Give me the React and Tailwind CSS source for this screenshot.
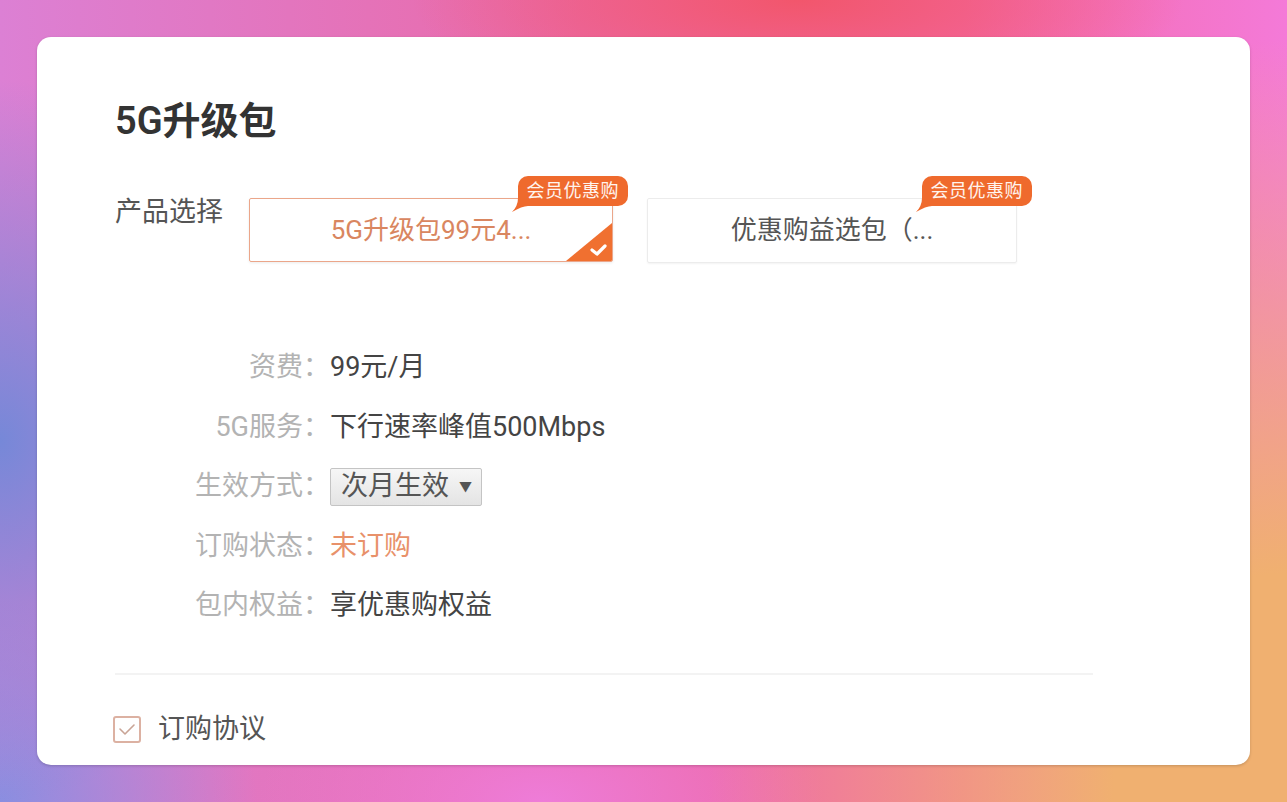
import React from "react";

const FONT = { fontFamily: 'Roboto, "Noto Sans CJK SC", "Noto Sans", sans-serif' };

function Badge() {
  return (
    <div className="absolute top-0 right-[-15px] h-[30px] px-[9px] flex items-center rounded-[10px] rounded-bl-[2px] bg-[#ef6a2d] text-[#fff4ee] text-[18px] leading-none tracking-[0.5px]">
      <svg className="absolute left-[-6px] bottom-[-6px]" width="16" height="14" viewBox="0 0 16 14">
        <path d="M6 0 L16 0 L16 8 Q10 8 0 14 Q6 8 6 0 Z" fill="#ef6a2d" />
      </svg>
      <span className="relative">会员优惠购</span>
    </div>
  );
}

function Row({ label, children }) {
  return (
    <div className="flex items-center h-[59.5px]">
      <div className="w-[215px] text-right text-[27px] text-[#b3b3b3] leading-none">{label}：</div>
      <div className="flex items-center text-[27px] text-[#444] leading-none">{children}</div>
    </div>
  );
}

export default function App() {
  return (
    <div
      style={FONT}
      className="w-[1287px] h-[802px] p-[37px] bg-[image:radial-gradient(30%_14%_at_62%_0%,#f2566c_0%,rgba(242,86,108,0)_100%),radial-gradient(22%_45%_at_0%_55%,#7688d8_0%,rgba(118,136,216,0)_100%),radial-gradient(45%_95%_at_100%_100%,#f0b070_0%,#f0b070_30%,rgba(240,176,112,0)_100%),radial-gradient(22%_18%_at_42%_100%,#ee7cd8_0%,rgba(238,124,216,0)_100%),radial-gradient(20%_25%_at_0%_100%,#8a8ee0_0%,rgba(138,142,224,0)_100%),linear-gradient(to_right,#dc80d4,#ea6aa8_45%,#f36aa8_75%,#f47ad8)]"
    >
      <div className="h-full rounded-[14px] bg-white shadow-[0_1px_3px_rgba(0,0,0,0.18)] pl-[78px] pt-[62px] flex flex-col overflow-hidden">
        <div className="text-[38px] leading-[44px] font-semibold text-[#333]">5G升级包</div>

        <div className="flex items-start mt-[33px]">
          <div className="w-[134px] mt-[18px] text-[27px] leading-[36px] text-[#555]">产品选择</div>
          <div className="relative pt-[22px]">
            <div className="relative w-[364px] h-[64px] border-[1.5px] border-[#eba68a] rounded-[2px] flex items-center justify-center text-[26px] text-[#d98660] shadow-[0_1px_3px_rgba(0,0,0,0.08)] overflow-hidden">
              5G升级包99元4...
              <svg className="absolute right-0 bottom-0" width="46" height="38" viewBox="0 0 46 38">
                <polygon points="46,0 46,38 0,38" fill="#f07030" />
                <polyline points="26,27 31,31 39,23" fill="none" stroke="#fff" strokeWidth="3.2" strokeLinecap="round" strokeLinejoin="round" />
              </svg>
            </div>
            <Badge />
          </div>
          <div className="relative pt-[22px] ml-[34px]">
            <div className="w-[370px] h-[65px] border border-[#ececec] rounded-[2px] flex items-center justify-center text-[26px] text-[#555] shadow-[0_1px_2px_rgba(0,0,0,0.05)]">
              优惠购益选包（...
            </div>
            <Badge />
          </div>
        </div>

        <div className="mt-[75px] ml-0 flex flex-col">
          <Row label="资费">99元/月</Row>
          <Row label="5G服务">下行速率峰值500Mbps</Row>
          <Row label="生效方式">
            <div className="w-[152px] h-[38px] border border-[#c4c4c4] rounded-[2px] bg-gradient-to-b from-[#f6f6f6] to-[#e4e4e4] flex items-center pl-[10px] text-[27px] text-[#555]">
              次月生效
              <span className="ml-[10px] text-[13px] text-[#555]">▼</span>
            </div>
          </Row>
          <Row label="订购状态">
            <span className="text-[#e8916a]">未订购</span>
          </Row>
          <Row label="包内权益">享优惠购权益</Row>
        </div>

        <div className="mt-[37px] w-[978px] h-[2px] bg-[#f3f3f3]" />

        <div className="mt-[35px] flex items-center h-[40px]">
          <div className="w-[28px] h-[27px] border-2 border-[#dcb1a2] rounded-[3px] flex items-center justify-center ml-[-2px]">
            <svg width="18" height="14" viewBox="0 0 18 14">
              <polyline points="2,6 7,11 16,2" fill="none" stroke="#c9a496" strokeWidth="1.6" strokeLinecap="round" strokeLinejoin="round" />
            </svg>
          </div>
          <span className="ml-[17px] text-[27px] text-[#555] leading-none">订购协议</span>
        </div>
      </div>
    </div>
  );
}
